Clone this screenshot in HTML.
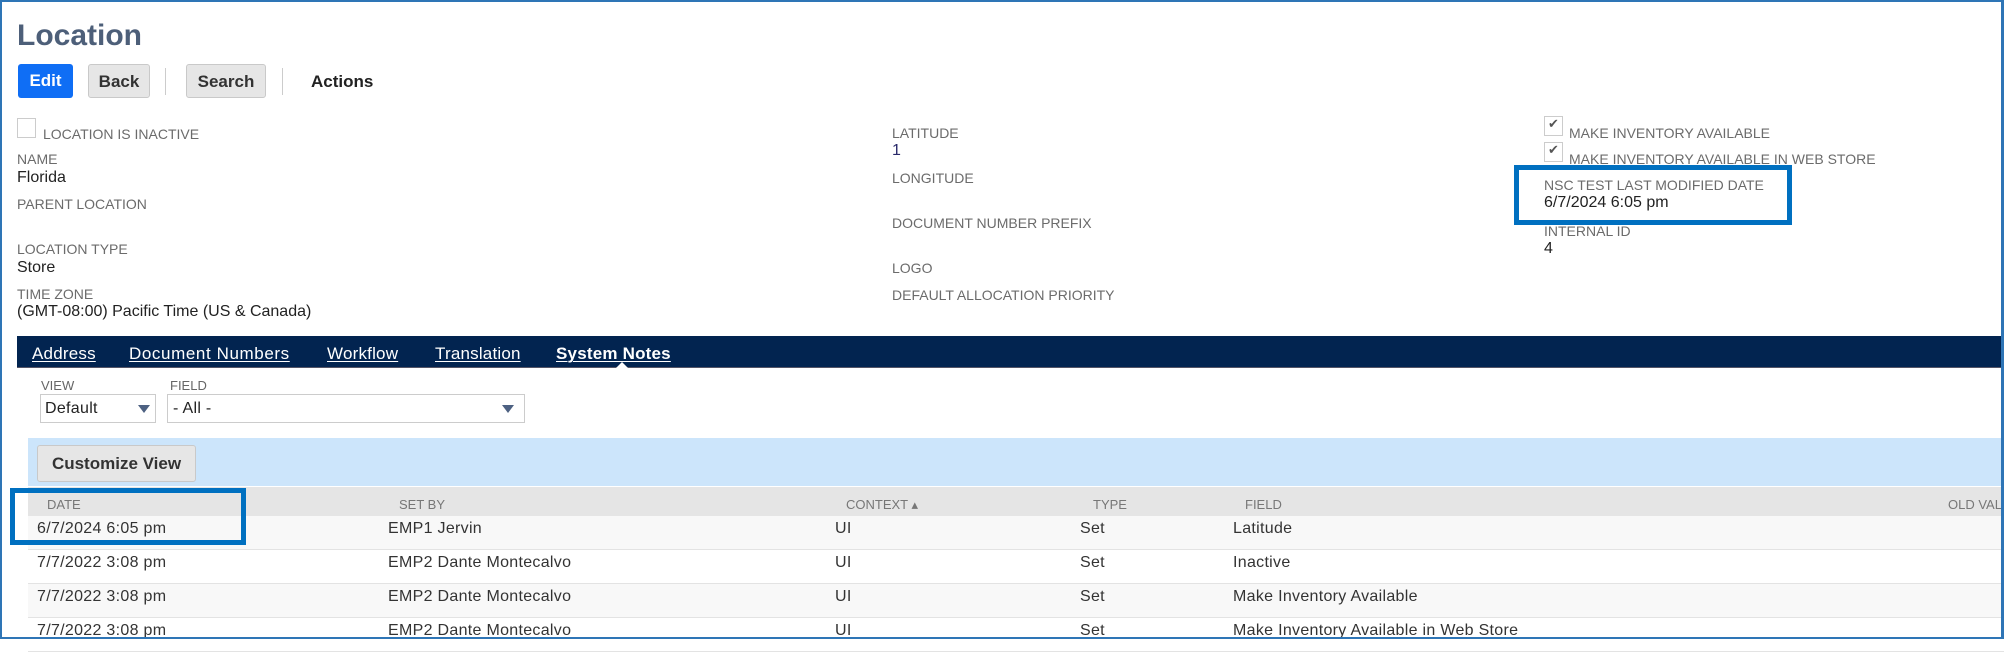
<!DOCTYPE html>
<html><head><meta charset="utf-8"><style>
*{margin:0;padding:0;box-sizing:border-box}
body{width:2004px;height:639px;overflow:hidden;background:#fff;font-family:"Liberation Sans",sans-serif;position:relative}
.a{position:absolute;white-space:nowrap;line-height:1}
.l{font-size:14px;color:#6b6b6b}
.v{font-size:16px;color:#222}
.btn{position:absolute;top:64px;height:34px;border-radius:3px;font-weight:bold;font-size:17px;line-height:34px;text-align:center}
.g{background:#e6e6e6;border:1px solid #c9c9c9;color:#333}
.sep{position:absolute;top:68px;width:1px;height:27px;background:#ccc}
.cb{position:absolute;width:19px;height:20px;border:1px solid #ccc;background:#fff}
.ck{font-size:13px;line-height:14px;text-align:center;color:#555}
.tab{position:absolute;top:344px;font-size:17px;color:#fff;text-decoration:underline;text-underline-offset:2px;text-decoration-thickness:1px;letter-spacing:0.2px}
.hl{position:absolute;border:5px solid #0070c0}
.row{position:absolute;left:28px;right:0;height:34px;border-bottom:1px solid #e3e3e3}
.h{font-size:13px;color:#777;top:498px}
.t{font-size:16px;color:#333;letter-spacing:0.3px}
</style></head><body>
<div style="position:absolute;inset:0;border:2px solid #2e75b6;border-right-width:3px;z-index:10;pointer-events:none"></div>
<div class="a" style="left:17px;top:21px;font-size:30px;font-weight:bold;color:#4d5f79">Location</div>
<div class="btn" style="left:18px;width:55px;background:#0f6ef5;color:#fff">Edit</div>
<div class="btn g" style="left:88px;width:62px">Back</div>
<div class="sep" style="left:165px"></div>
<div class="btn g" style="left:186px;width:80px">Search</div>
<div class="sep" style="left:282px"></div>
<div class="a" style="left:311px;top:73px;font-size:17px;font-weight:bold;color:#222">Actions</div>

<div class="cb" style="left:17px;top:118px"></div>
<div class="a l" style="left:43px;top:127px">LOCATION IS INACTIVE</div>
<div class="a l" style="left:17px;top:152px">NAME</div>
<div class="a v" style="left:17px;top:170px">Florida</div>
<div class="a l" style="left:17px;top:197px">PARENT LOCATION</div>
<div class="a l" style="left:17px;top:242px">LOCATION TYPE</div>
<div class="a v" style="left:17px;top:260px">Store</div>
<div class="a l" style="left:17px;top:287px">TIME ZONE</div>
<div class="a v" style="left:17px;top:304px">(GMT-08:00) Pacific Time (US &amp; Canada)</div>

<div class="a l" style="left:892px;top:126px">LATITUDE</div>
<div class="a v" style="left:892px;top:143px;color:#2a2a6a">1</div>
<div class="a l" style="left:892px;top:171px">LONGITUDE</div>
<div class="a l" style="left:892px;top:216px">DOCUMENT NUMBER PREFIX</div>
<div class="a l" style="left:892px;top:261px">LOGO</div>
<div class="a l" style="left:892px;top:288px">DEFAULT ALLOCATION PRIORITY</div>

<div class="cb ck" style="left:1544px;top:116px">✔</div>
<div class="a l" style="left:1569px;top:126px">MAKE INVENTORY AVAILABLE</div>
<div class="cb ck" style="left:1544px;top:142px">✔</div>
<div class="a l" style="left:1569px;top:152px">MAKE INVENTORY AVAILABLE IN WEB STORE</div>
<div class="a l" style="left:1544px;top:178px">NSC TEST LAST MODIFIED DATE</div>
<div class="a v" style="left:1544px;top:195px">6/7/2024 6:05 pm</div>
<div class="a l" style="left:1544px;top:224px">INTERNAL ID</div>
<div class="a v" style="left:1544px;top:241px">4</div>
<div class="hl" style="left:1514px;top:165px;width:278px;height:60px"></div>

<div style="position:absolute;left:17px;right:0;top:336px;height:32px;background:#022450;border-bottom:1px solid #556"></div>
<div class="tab" style="left:32px">Address</div>
<div class="tab" style="left:129px;letter-spacing:0.6px">Document Numbers</div>
<div class="tab" style="left:327px">Workflow</div>
<div class="tab" style="left:435px">Translation</div>
<div class="tab" style="left:556px;font-weight:bold">System Notes</div>
<div style="position:absolute;left:616px;top:362px;width:0;height:0;border-left:6px solid transparent;border-right:6px solid transparent;border-bottom:6px solid #fff"></div>

<div class="a" style="left:41px;top:379px;font-size:13px;color:#666">VIEW</div>
<div class="a" style="left:170px;top:379px;font-size:13px;color:#666">FIELD</div>
<div style="position:absolute;left:40px;top:394px;width:116px;height:29px;border:1px solid #ccc"></div>
<div class="a t" style="left:45px;top:401px;color:#222">Default</div>
<div style="position:absolute;left:138px;top:405px;border-left:6px solid transparent;border-right:6px solid transparent;border-top:8px solid #4d6182"></div>
<div style="position:absolute;left:167px;top:394px;width:358px;height:29px;border:1px solid #ccc"></div>
<div class="a t" style="left:173px;top:401px;color:#222">- All -</div>
<div style="position:absolute;left:502px;top:405px;border-left:6px solid transparent;border-right:6px solid transparent;border-top:8px solid #4d6182"></div>

<div style="position:absolute;left:28px;right:0;top:438px;height:48px;background:#cce5fb"></div>
<div style="position:absolute;left:37px;top:445px;width:159px;height:37px;background:#e6e6e6;border:1px solid #c9c9c9;border-radius:3px;font-size:17px;font-weight:bold;color:#333;text-align:center;line-height:35px">Customize View</div>

<div style="position:absolute;left:28px;right:0;top:487px;height:29px;background:#e5e5e5"></div>
<div class="a h" style="left:47px">DATE</div>
<div class="a h" style="left:399px">SET BY</div>
<div class="a h" style="left:846px">CONTEXT ▴</div>
<div class="a h" style="left:1093px">TYPE</div>
<div class="a h" style="left:1245px">FIELD</div>
<div class="a h" style="left:1948px">OLD VALUE</div>

<div class="row" style="top:516px;background:#f8f8f8"></div>
<div class="row" style="top:550px;background:#fff"></div>
<div class="row" style="top:584px;background:#f8f8f8"></div>
<div class="row" style="top:618px;background:#fff"></div>

<div class="a t" style="left:37px;top:521px">6/7/2024 6:05 pm</div>
<div class="a t" style="left:388px;top:521px">EMP1 Jervin</div>
<div class="a t" style="left:835px;top:521px">UI</div>
<div class="a t" style="left:1080px;top:521px">Set</div>
<div class="a t" style="left:1233px;top:521px">Latitude</div>

<div class="a t" style="left:37px;top:555px">7/7/2022 3:08 pm</div>
<div class="a t" style="left:388px;top:555px">EMP2 Dante Montecalvo</div>
<div class="a t" style="left:835px;top:555px">UI</div>
<div class="a t" style="left:1080px;top:555px">Set</div>
<div class="a t" style="left:1233px;top:555px">Inactive</div>

<div class="a t" style="left:37px;top:589px">7/7/2022 3:08 pm</div>
<div class="a t" style="left:388px;top:589px">EMP2 Dante Montecalvo</div>
<div class="a t" style="left:835px;top:589px">UI</div>
<div class="a t" style="left:1080px;top:589px">Set</div>
<div class="a t" style="left:1233px;top:589px">Make Inventory Available</div>

<div class="a t" style="left:37px;top:623px">7/7/2022 3:08 pm</div>
<div class="a t" style="left:388px;top:623px">EMP2 Dante Montecalvo</div>
<div class="a t" style="left:835px;top:623px">UI</div>
<div class="a t" style="left:1080px;top:623px">Set</div>
<div class="a t" style="left:1233px;top:623px">Make Inventory Available in Web Store</div>

<div class="hl" style="left:10px;top:488px;width:236px;height:57px"></div>
</body></html>
